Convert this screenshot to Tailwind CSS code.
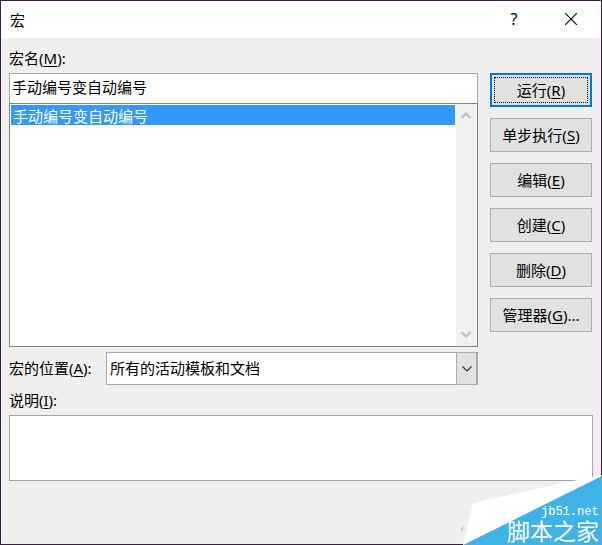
<!DOCTYPE html>
<html lang="zh-CN">
<head>
    <meta charset="UTF-8">
    <meta name="viewport" content="width=device-width, initial-scale=1.0">
    <title>宏</title>
    <script src="https://cdn.jsdelivr.net/npm/@tailwindcss/browser@4"></script>
</head>
<body class="font-['Noto_Sans','Noto_Sans_CJK_SC',sans-serif] text-[15px] leading-5 text-black">

    <div id="macro-dialog" class="relative flex flex-col min-h-screen bg-[#efefef] border border-[#42184a]">
        <header class="flex items-center h-[37px] bg-white pl-[9px] pr-3">
            <h1 class="flex-grow">宏</h1>
            <button type="button" aria-label="帮助" class="w-9 h-8 pb-[2px] pr-[2px] text-base">?</button>
            <button type="button" aria-label="关闭" class="flex items-center justify-center w-9 h-8 ml-5 pb-[2px]">
                <svg class="w-3 h-3" viewBox="0 0 12 12" fill="none" stroke="#000" stroke-width="1.1"><path d="M0 0l12 12M12 0L0 12"/></svg>
            </button>
        </header>

        <form class="flex flex-col px-2 pt-[10px]">
            <label for="macro-name" class="self-start">宏名(<u class="decoration-1 underline-offset-2">M</u>):</label>

            <div class="flex items-start gap-3 mt-[5px]">
                <div class="flex-grow flex flex-col">
                    <input id="macro-name" type="text" value="手动编号变自动编号" class="w-full h-[30px] px-[2px] pb-[5px] bg-white border border-b-0 border-[#a5a5ab] outline-none">

                    <div class="flex h-[244px] bg-white border border-[#828287]">
                        <select size="10" aria-label="宏列表" class="flex-grow h-full p-px appearance-none bg-white outline-none overflow-hidden">
                            <option selected class="h-5 min-h-5 px-[2px] py-0 leading-[18px] bg-[linear-gradient(#3399ff,#3399ff)] text-white [-webkit-text-fill-color:white]">手动编号变自动编号</option>
                        </select>
                        <div class="flex flex-col justify-between items-center w-[21px] py-2 pr-[2px] bg-[#f0f0f0]">
                            <button type="button" aria-label="向上滚动">
                                <svg class="w-[10px] h-[7px]" viewBox="0 0 10 7" fill="none" stroke="#bfbfbf" stroke-width="2"><path d="M.5 6L5 1.5L9.5 6"/></svg>
                            </button>
                            <button type="button" aria-label="向下滚动">
                                <svg class="w-[10px] h-[7px]" viewBox="0 0 10 7" fill="none" stroke="#bfbfbf" stroke-width="2"><path d="M.5 1L5 5.5L9.5 1"/></svg>
                            </button>
                        </div>
                    </div>

                    <div class="flex items-center mt-[5px]">
                        <label for="macro-place" class="w-[97px] pb-[2px]">宏的位置(<u class="decoration-1 underline-offset-2">A</u>):</label>
                        <div class="relative flex-grow">
                            <select id="macro-place" class="block w-full h-[33px] pl-[3px] pb-[2px] appearance-none bg-white border border-[#a5a5ab] outline-none">
                                <option>所有的活动模板和文档</option>
                            </select>
                            <span class="absolute inset-y-0 right-0 flex items-center justify-center w-[22px] bg-[#e1e1e1] border border-r-2 border-[#ababab] pointer-events-none">
                                <svg class="w-[10px] h-[6px]" viewBox="0 0 10 6" fill="none" stroke="#333" stroke-width="1.2"><path d="M.5.5L5 5L9.5.5"/></svg>
                            </span>
                        </div>
                    </div>
                </div>

                <div class="flex flex-col gap-[11px] w-[102px] mr-px">
                    <button type="button" class="relative h-[34px] bg-[#e1e1e1] border-2 border-[#0078d7]">
                        <span class="absolute inset-[2px] border border-dotted border-black"></span>
                        运行(<u class="decoration-1 underline-offset-2">R</u>)
                    </button>
                    <button type="button" class="h-[34px] bg-[#e1e1e1] border border-[#adadad]">单步执行(<u class="decoration-1 underline-offset-2">S</u>)</button>
                    <button type="button" class="h-[34px] bg-[#e1e1e1] border border-[#adadad]">编辑(<u class="decoration-1 underline-offset-2">E</u>)</button>
                    <button type="button" class="h-[34px] bg-[#e1e1e1] border border-[#adadad]">创建(<u class="decoration-1 underline-offset-2">C</u>)</button>
                    <button type="button" class="h-[34px] bg-[#e1e1e1] border border-[#adadad]">删除(<u class="decoration-1 underline-offset-2">D</u>)</button>
                    <button type="button" class="h-[34px] bg-[#e1e1e1] border border-[#adadad]">管理器(<u class="decoration-1 underline-offset-2">G</u>)...</button>
                </div>
            </div>

            <label for="macro-note" class="self-start mt-[5px]">说明(<u class="decoration-1 underline-offset-2">I</u>):</label>
            <textarea id="macro-note" class="block w-full h-[66px] mt-[5px] p-1 bg-white border border-[#a5a5ab] outline-none resize-none"></textarea>
        </form>

        <!-- site mark on the folded corner -->
        <svg class="absolute -right-px -bottom-px w-[144px] h-[70px]" viewBox="0 0 144 70">
            <path d="M5 70L15 28 119 5 144 0V70z" fill="#fff"/>
            <path d="M5 70L144 1V70z" fill="#3fb3e8"/>
            <path d="M2 53l3 3M5 51l-1 5" stroke="#c4bfc4" fill="none"/>
            <text x="83" y="40" fill="#fff" class="font-['Liberation_Mono',monospace] text-[12px]">jb51.net</text>
            <text x="49" y="65" fill="#fff" class="font-['Liberation_Sans','Noto_Sans_CJK_SC',sans-serif] text-[23px]">脚本之家</text>
        </svg>
    </div>

</body>
</html>
